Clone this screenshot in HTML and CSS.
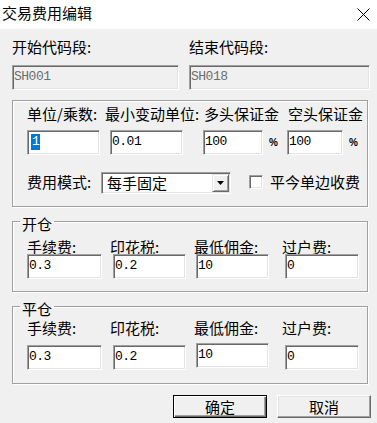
FILE: index.html
```html
<!DOCTYPE html>
<html lang="zh-CN">

<head>
    <meta charset="UTF-8">
    <meta name="viewport" content="width=device-width, initial-scale=1.0">
    <title>交易费用编辑</title>
    <link rel="stylesheet" href="styles.css">
</head>

<body>
    <div class="titlebar">
        <span class="title">交易费用编辑</span>
        <svg class="close" viewBox="0 0 13 13" width="13" height="13">
            <path d="M0.5 0.5 L12.5 12.5 M12.5 0.5 L0.5 12.5" stroke="#000" stroke-width="1" fill="none" />
        </svg>
    </div>

    <div class="codes">
        <div class="code-col code-start">
            <div class="label">开始代码段:</div>
            <div class="field disabled">SH001</div>
        </div>
        <div class="code-col code-end">
            <div class="label">结束代码段:</div>
            <div class="field disabled">SH018</div>
        </div>
    </div>

    <div class="group group-basic">
        <div class="basic-labels">
            <span class="label lb-unit">单位/乘数:</span>
            <span class="label lb-tick">最小变动单位:</span>
            <span class="label lb-long">多头保证金</span>
            <span class="label lb-short">空头保证金</span>
        </div>
        <div class="basic-fields">
            <div class="field f-unit"><span class="sel">1</span></div>
            <div class="field f-tick">0.01</div>
            <div class="field f-long">100</div>
            <span class="pct">%</span>
            <div class="field f-short">100</div>
            <span class="pct">%</span>
        </div>
        <div class="mode-row">
            <span class="label lb-mode">费用模式:</span>
            <div class="combo">
                <span class="combo-text">每手固定</span>
                <span class="combo-btn">
                    <svg viewBox="0 0 7 4" width="7" height="4"><polygon points="0,0 7,0 3.5,4" fill="#000" /></svg>
                </span>
            </div>
            <label class="check"><span class="check-box"></span>平今单边收费</label>
        </div>
    </div>

    <fieldset class="group fee-group group-open">
        <legend>开仓</legend>
        <div class="fee-labels">
            <span class="label fl-1">手续费:</span>
            <span class="label fl-2">印花税:</span>
            <span class="label fl-3">最低佣金:</span>
            <span class="label fl-4">过户费:</span>
        </div>
        <div class="fee-fields">
            <div class="field ff-1">0.3</div>
            <div class="field ff-2">0.2</div>
            <div class="field ff-3">10</div>
            <div class="field ff-4">0</div>
        </div>
    </fieldset>

    <fieldset class="group fee-group group-close">
        <legend>平仓</legend>
        <div class="fee-labels">
            <span class="label fl-1">手续费:</span>
            <span class="label fl-2">印花税:</span>
            <span class="label fl-3">最低佣金:</span>
            <span class="label fl-4">过户费:</span>
        </div>
        <div class="fee-fields">
            <div class="field ff-1">0.3</div>
            <div class="field ff-2">0.2</div>
            <div class="field ff-3 raised">10</div>
            <div class="field ff-4">0</div>
        </div>
    </fieldset>

    <div class="buttons">
        <button class="btn btn-default">确定</button>
        <button class="btn">取消</button>
    </div>
</body>

</html>
```

FILE: styles.css
```css
* {
    box-sizing: border-box;
}

body {
    margin: 0;
    width: 377px;
    height: 423px;
    overflow: hidden;
    background-color: #f0f0f0;
    color: #000;
    font-family: "Noto Sans CJK SC", "Noto Sans", sans-serif;
    font-size: 15px;
}

.titlebar {
    height: 29px;
    background-color: #fff;
    display: flex;
    justify-content: space-between;
    padding: 3px 7px 0 2px;
}

.title {
    line-height: 20px;
}

.close {
    margin-top: 5px;
}

.label {
    line-height: 20px;
    white-space: nowrap;
    flex-shrink: 0;
}

/* sunken edit box */
.field {
    height: 25px;
    background-color: #fff;
    border: 1px solid;
    border-color: #a0a0a0 #fff #fff #a0a0a0;
    box-shadow: inset 1px 1px 0 #696969, inset -1px -1px 0 #e3e3e3;
    padding-left: 1px;
    font-family: "Liberation Mono", monospace;
    font-size: 13px;
    letter-spacing: -0.5px;
    line-height: 22px;
    white-space: nowrap;
    flex-shrink: 0;
}

.field.disabled {
    background-color: #f0f0f0;
    color: #6d6d6d;
}

.sel {
    display: inline-block;
    margin: 2px 0 0 2px;
    padding: 0 1px;
    line-height: 16px;
    background-color: #0078d7;
    color: #fff;
}

.codes {
    display: flex;
    gap: 10px;
    margin: 8px 0 0 12px;
}

.code-start {
    width: 167px;
}

.code-end {
    width: 181px;
}

.code-col .field {
    margin-top: 8px;
}

.group {
    width: 356px;
    margin: 0 0 0 12px;
    border: 1px solid #a0a0a0;
    box-shadow: inset 1px 1px 0 #fff, 1px 1px 0 #fff;
}

.group-basic {
    height: 107px;
    margin-top: 10px;
    padding: 3px 0 0 14px;
}

.basic-labels {
    display: flex;
}

.lb-unit {
    width: 78px;
}

.lb-tick {
    width: 99px;
}

.lb-long {
    width: 84px;
}

.basic-fields {
    display: flex;
    align-items: center;
    margin-top: 6px;
}

.f-unit,
.f-tick {
    width: 73px;
}

.f-tick {
    margin-left: 10px;
}

.f-long {
    width: 60px;
    margin-left: 20px;
}

.f-short {
    width: 56px;
}

.pct {
    width: 24px;
    padding-left: 6px;
    font-family: "Liberation Sans", sans-serif;
    font-size: 10px;
    font-weight: bold;
}

.mode-row {
    display: flex;
    align-items: flex-start;
    margin-top: 17px;
}

.lb-mode {
    width: 74px;
}

.combo {
    width: 130px;
    height: 22px;
    display: flex;
    padding: 1px;
    background-color: #fff;
    border: 1px solid;
    border-color: #a0a0a0 #fff #fff #a0a0a0;
    box-shadow: inset 1px 1px 0 #696969, inset -1px -1px 0 #e3e3e3;
}

.combo-text {
    flex: 1;
    padding-left: 4px;
    line-height: 18px;
}

.combo-btn {
    width: 17px;
    height: 18px;
    display: flex;
    align-items: center;
    justify-content: center;
    background-color: #f0f0f0;
    border: 1px solid;
    border-color: #e3e3e3 #696969 #696969 #e3e3e3;
    box-shadow: inset 1px 1px 0 #fff, inset -1px -1px 0 #a0a0a0;
}

.check {
    display: flex;
    align-items: center;
    margin-left: 18px;
    line-height: 20px;
}

.check-box {
    width: 14px;
    height: 14px;
    margin-right: 7px;
    background-color: #fff;
    border: 1px solid;
    border-color: #a0a0a0 #fff #fff #a0a0a0;
    box-shadow: inset 1px 1px 0 #696969, inset -1px -1px 0 #e3e3e3;
}

/* fee group boxes */
.fee-group {
    min-width: 0;
    margin-top: 4px;
}

.fee-group legend {
    margin-left: -7px;
    padding: 6px 2px 0;
    line-height: 14px;
}

.group-open {
    padding: 6px 0 12px 14px;
}

.group-close {
    padding: 2px 0 13px 14px;
}

.fee-labels {
    display: flex;
}

.fl-1 {
    width: 83px;
}

.fl-2 {
    width: 84px;
}

.fl-3 {
    width: 88px;
}

.fee-fields {
    display: flex;
    align-items: flex-start;
}

.group-open .fee-fields {
    margin-top: -3px;
}

.group-close .fee-fields {
    margin-top: 7px;
}

.ff-1 {
    width: 75px;
}

.ff-2 {
    width: 73px;
    margin-left: 11px;
}

.ff-3 {
    width: 73px;
    margin-left: 10px;
}

.ff-3.raised {
    margin-top: -2px;
}

.ff-4 {
    width: 74px;
    margin-left: 16px;
}

.buttons {
    display: flex;
    justify-content: flex-end;
    gap: 10px;
    margin-top: 11px;
    padding-right: 6px;
}

.btn {
    width: 94px;
    height: 23px;
    padding: 0;
    font: inherit;
    line-height: 19px;
    color: #000;
    background-color: #f0f0f0;
    border: 1px solid;
    border-color: #fff #696969 #696969 #fff;
    box-shadow: inset -1px -1px 0 #a0a0a0, inset 1px 1px 0 #e3e3e3;
}

.btn-default {
    border-color: #000;
    box-shadow: inset 1px 1px 0 #fff, inset -1px -1px 0 #696969, inset -2px -2px 0 #a0a0a0;
}
```
